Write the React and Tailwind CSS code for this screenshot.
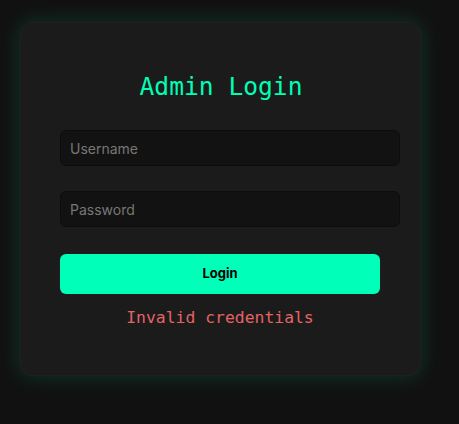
export default function App() {
  return (
    <div className="min-h-screen w-full bg-[#111111] pt-[22px] pl-[20px]" style={{ fontFamily: '"Inter", "Liberation Sans", sans-serif' }}>
      <div className="w-[401px] h-[354px] rounded-xl bg-[#1b1b1b] pl-[39px] pr-10 pt-[49px] shadow-[0_0_22px_rgba(0,255,170,0.16)] border border-[#202020]">
        <h2
          className="text-center text-[24.6px] leading-[30px] text-[#00ffb4] m-0 w-[322px]"
          style={{ fontFamily: '"DejaVu Sans Mono", monospace' }}
        >
          Admin Login
        </h2>
        <div className="mt-[28px] flex flex-col">
          <input
            placeholder="Username"
            className="w-[340px] h-[36px] rounded-md bg-[#121212] border border-[#0d0d0d] px-[9px] text-[14px] text-[#ddd] placeholder:text-[#777] outline-none"
          />
          <input
            placeholder="Password"
            type="password"
            className="mt-[25px] w-[340px] h-[36px] rounded-md bg-[#121212] border border-[#0d0d0d] px-[9px] text-[14px] text-[#ddd] placeholder:text-[#777] outline-none"
          />
          <button className="mt-[27px] w-[320px] h-[40px] rounded-md bg-[#00ffb8] text-black text-[13px] font-bold">
            Login
          </button>
          <div
            className="w-[320px] mt-[12px] text-center text-[16.4px] leading-[24px] text-[#e36464]"
            style={{ fontFamily: '"DejaVu Sans Mono", monospace' }}
          >
            Invalid credentials
          </div>
        </div>
      </div>
    </div>
  );
}
